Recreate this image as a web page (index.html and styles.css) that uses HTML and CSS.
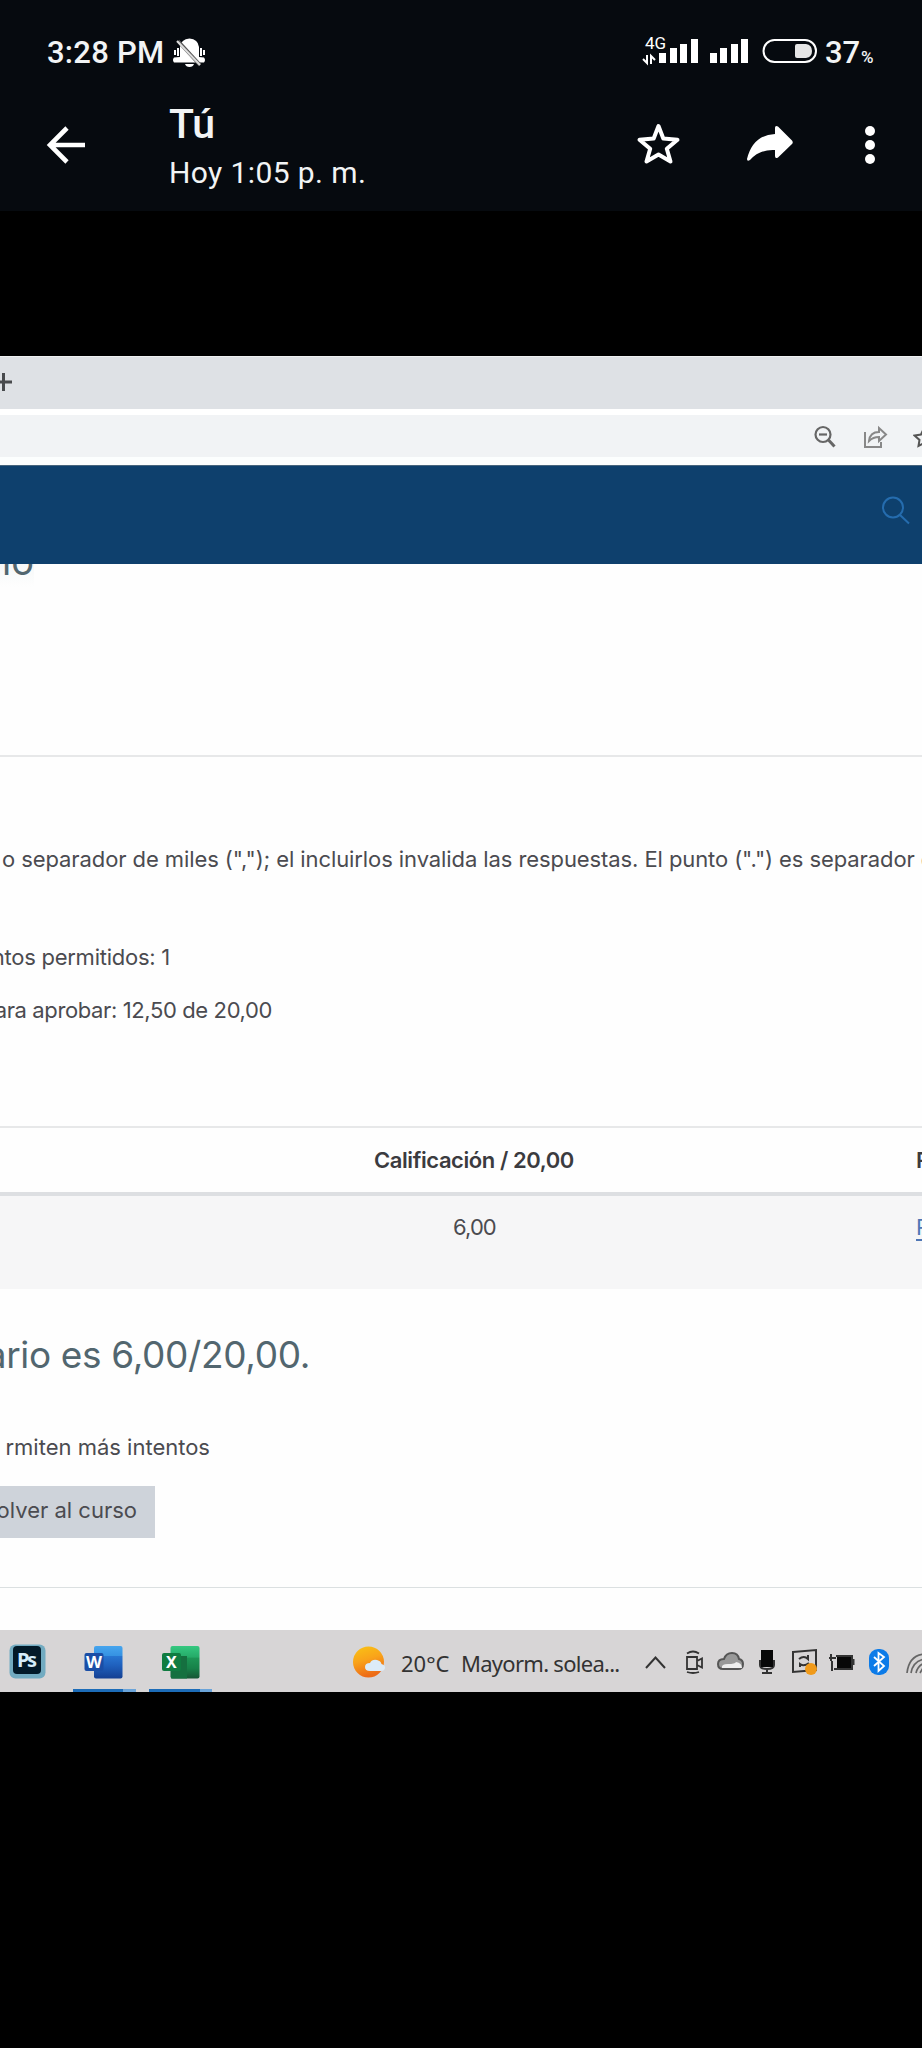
FILE: index.html
```html
<!DOCTYPE html>
<html lang="es">
<head>
<meta charset="utf-8">
<title>Tú</title>
<link rel="stylesheet" href="styles.css">
</head>
<body>
<header class="viewer-head">
  <div class="status">
    <span class="clock">3:28 PM</span>
    <svg class="bell" width="34" height="32" viewBox="172 37 34 32">
      <path fill="#fff" d="M180 57V47q1-8 9.500-8.500Q198 39 199 47v10l5 .5q2 2.500 0 5h-30q-2-2.500 0-5z"/>
      <path fill="#fff" d="M185 64h9q-1 3-4.500 3t-4.500-3zM174 50h2v5h-2zM177 48h2v8h-2zM200 48h2v8h-2zM203 50h2v5h-2z"/>
      <path stroke="#555" stroke-width="3.400" d="M178 41l22 24"/><path stroke="#ddd" stroke-width="2" d="M177 41l23 24"/>
    </svg>
    <svg class="signal" width="110" height="32" viewBox="640 35 110 32">
      <text class="net" x="645" y="49" textLength="21">4G</text>
      <path fill="#fff" d="M659 53h7v10h-7zM670 48h7v15h-7zM680 44h7v19h-7zM691 39h7v24h-7zM710 53h7v10h-7zM720 48h7v15h-7zM731 44h7v19h-7zM741 39h7v24h-7z"/>
      <path fill="none" stroke="#fff" stroke-width="2" d="M647 55v8l-4-4M651 64v-8l4 4"/>
    </svg>
    <svg class="battery" width="56" height="26" viewBox="762 38 56 26">
      <rect x="763.500" y="40" width="52.500" height="22" rx="11" fill="none" stroke="#fff" stroke-width="2"/>
      <path fill="#e6e6e6" d="M797 44h9q6 1 6 7t-6 7h-9q-2 0-2-2V46q0-2 2-2z"/>
    </svg>
    <span class="level">37</span><span class="percent">%</span>
  </div>
  <div class="appbar">
    <svg class="back" width="40" height="40" viewBox="46 125 40 40"><path fill="none" stroke="#fff" stroke-width="4.600" d="M85 145H50M67 128L50 145l17 17"/></svg>
    <div class="titles"><div class="name">Tú</div><div class="date">Hoy 1:05 p. m.</div></div>
    <svg class="star" width="46" height="44" viewBox="635 121 46 44"><path fill="none" stroke="#fff" stroke-width="4" stroke-linejoin="round" d="M658.500 126l4.800 12.500 14.200 1.300-10.700 9 3.700 12.700-12-7-12 7 3.700-12.700-10.700-9 14.200-1.300z"/></svg>
    <svg class="forward" width="48" height="40" viewBox="746 124 48 40"><path fill="#fff" d="M775 134v-6q0-3 3-1.500l14 14q1.500 2 0 3.500l-14 13.500q-3 1.500-3-1.500v-6q-15-1-25 10-3 2-3-1 6-24 28-25z"/></svg>
    <svg class="more" width="12" height="40" viewBox="864 125 12 40"><g fill="#fff"><circle cx="870" cy="131" r="5"/><circle cx="870" cy="145" r="5"/><circle cx="870" cy="159" r="5"/></g></svg>
  </div>
</header>
<main class="shot">
  <div class="tabs"><svg width="14" height="20" viewBox="0 372 14 20"><path fill="none" stroke="#484a4d" stroke-width="3" d="M-5 382h17M3.500 373v18"/></svg></div>
  <div class="toolbar">
    <svg width="24" height="24" viewBox="813 425 24 24"><g fill="none" stroke="#666" stroke-width="2.200"><circle cx="823" cy="434.500" r="7.500"/><path d="M819 434.500h8"/><path stroke-width="3" d="M828.500 440l6 6.500"/></g></svg>
    <svg class="share" width="26" height="24" viewBox="862 425 26 24"><g fill="none" stroke="#888" stroke-width="2"><path d="M865 432v15h16v-5"/><path d="M869 441q1-9 10-9v-4l7 6.500-7 6.500v-4q-6 0-10 4z"/></g></svg>
    <svg class="fav" width="9" height="24" viewBox="913 425 9 24"><path fill="none" stroke="#555" stroke-width="2" d="M924 428l-3 6.500-6.500 1 5 4.500-1 6 5.500-3"/></svg>
  </div>
  <div class="site-head"><svg width="30" height="30" viewBox="880 495 30 30"><g fill="none" stroke="#256cae" stroke-width="2"><circle cx="893" cy="507.500" r="10"/><path d="M900 515l9 8.500"/></g></svg></div>
  <div class="cut-title"><span>io</span></div>
  <section class="intro">
    <p class="instructions">o separador de miles (","); el incluirlos invalida las respuestas. El punto (".") es separador d</p>
    <p class="attempts"><span>ntos permitidos: 1</span></p>
    <p class="pass"><span>ara aprobar: 12,50 de 20,00</span></p>
  </section>
  <div class="grades">
    <div class="grade-head"><b>Calificación / 20,00</b><b class="review">R</b></div>
    <div class="grade-row"><span class="mark">6,00</span><a class="review">R</a></div>
  </div>
  <h2 class="final"><span>ario es 6,00/20,00.</span></h2>
  <p class="no-more"><span>rmiten más intentos</span></p>
  <div class="button"><span>olver al curso</span></div>
  <footer class="taskbar">
    <svg class="apps" width="220" height="62" viewBox="0 1630 220 62">
      <defs>
        <linearGradient id="w" x2="0" y2="1"><stop offset="0" stop-color="#46a5ee"/><stop offset=".3" stop-color="#3692e2"/><stop offset=".31" stop-color="#2876d2"/><stop offset=".6" stop-color="#1f60bd"/><stop offset="1" stop-color="#143f92"/></linearGradient>
        <linearGradient id="x" x2="0" y2="1"><stop offset="0" stop-color="#35c880"/><stop offset=".35" stop-color="#25aa68"/><stop offset=".36" stop-color="#1d9656"/><stop offset=".68" stop-color="#178249"/><stop offset="1" stop-color="#175535"/></linearGradient>
      </defs>
      <rect x="9.500" y="1643.500" width="36" height="34" rx="6" fill="#72abc1"/><rect x="13" y="1645" width="28" height="28" rx="4" fill="#021a29"/>
      <text class="ps" x="17" y="1666" textLength="20">Ps</text>
      <rect x="94" y="1645" width="28.500" height="32.500" rx="2" fill="url(#w)"/><rect x="84.500" y="1652" width="19" height="18" rx="2" fill="#1a4ea6"/><text class="tile" x="86" y="1667" textLength="16" lengthAdjust="spacingAndGlyphs">W</text>
      <rect x="170.500" y="1645" width="29" height="32.500" rx="2" fill="url(#x)"/><path fill="#157040" d="M171 1655h16v22.500h-16z"/><rect x="162" y="1652" width="19" height="18" rx="2" fill="#107c41"/><text class="tile" x="166" y="1667" textLength="11">X</text>
      <path fill="#1c6cb8" d="M73 1688h50v4H73zM149 1688h51v4h-51z"/><path fill="#6ba4d9" d="M123 1688h13v4h-13zM200 1688h12v4h-12z"/>
    </svg>
    <svg class="sun" width="34" height="36" viewBox="352 1643 34 36">
      <defs><linearGradient id="s" x2=".3" y2="1"><stop stop-color="#f9c414"/><stop offset=".5" stop-color="#f9a31a"/><stop offset="1" stop-color="#ed6b17"/></linearGradient></defs>
      <circle cx="368.500" cy="1661" r="15.500" fill="url(#s)"/><path fill="#dcebf8" d="M370 1670q-5 0-5-4 0-4 5-4 2-4 7-3 4 1 4.500 4 4 1 3.500 4t-4 3z"/>
    </svg>
    <span class="temp">20°C</span><span class="weather">Mayorm. solea...</span>
    <svg class="tray" width="282" height="62" viewBox="640 1630 282 62">
      <g fill="none" stroke="#333" stroke-width="2">
        <path d="M646 1667l9.500-10.500 9.500 10.500"/>
        <path stroke-width="1.800" d="M687 1652.500q6-4 12 0M687 1671q6 2 12 0M687 1656h10v12h-10zM697 1660l5-2.500v9l-5-2.500z"/>
        <path stroke="#555" fill="#999" d="M723 1668q-5 0-5-5t6-5q2-6 8-6t7 6q4 1 4 5 0 5-5 5z"/>
        <path d="M760 1659v5q0 4 7 4t7-4v-5M767 1668v4M762 1672h10"/>
        <path d="M793 1651l23-2v20l-23 2zM799 1658q5-4 9 0v-4M809 1662q-5 4-9 1v3"/>
        <path d="M836 1655h16v13h-18M831 1653v7M829 1657h7M832 1660v10M853.500 1658v6"/>
        <g stroke="#666" stroke-width="1.700"><path d="M907 1672q2-18 18-19M911 1672q2-12 14-14M916 1672q2-8 9-10M920 1672l3-5"/></g>
      </g>
      <path fill="#eee" d="M722 1667q-1-4 6-4t8-2q6 1 6 6z"/>
      <rect x="761" y="1649" width="12" height="17" fill="#080808"/><rect x="837" y="1656" width="14" height="11" fill="#080808"/>
      <circle cx="811" cy="1668" r="6" fill="#f09a1a"/>
      <rect x="869" y="1648" width="20" height="26" rx="9" fill="#0c7be8"/><path fill="none" stroke="#fff" stroke-width="1.800" d="M874 1656l10 9-5.500 5v-18l5.500 4-10 9"/>
    </svg>
  </footer>
</main>
</body>
</html>
```
FILE: styles.css
```css
* { box-sizing: border-box; }
body { margin: 0; background: #000; width: 922px; height: 2048px; overflow: hidden; }
svg { display: block; flex: none; }
p, h2 { margin: 0; font-weight: 400; }
.viewer-head { height: 211px; background: #060a0f; color: #f2f4f5; font-family: Roboto, sans-serif; }
.status { display: flex; height: 104px; padding-left: 47px; white-space: nowrap; }
.clock { width: 125px; font-size: 31px; font-weight: 500; letter-spacing: .25px; line-height: 105px; }
.bell { margin-top: 37px; }
.signal { margin: 35px 0 0 434px; }
.net { font: 17px Roboto, sans-serif; fill: #fff; }
.battery { margin: 38px 0 0 12px; }
.level { width: 36px; margin-left: 7px; font-size: 31px; font-weight: 500; line-height: 105px; }
.percent { font-size: 17px; font-weight: 500; line-height: 115px; }
.appbar { display: flex; height: 107px; padding-left: 46px; }
.back { margin-top: 21px; }
.titles { width: 466px; margin-left: 83px; white-space: nowrap; }
.name { height: 40px; font-size: 41px; font-weight: 500; line-height: 40px; }
.date { height: 50px; margin-top: 4px; font-size: 30px; line-height: 50px; letter-spacing: .4px; }
.star { margin-top: 17px; }
.forward { margin: 20px 0 0 65px; }
.more { margin: 21px 0 0 70px; }

.shot { height: 1336px; margin-top: 145px; overflow: hidden; background: #fefefe; color: #4b4b50; font: 22px Inter, sans-serif; white-space: nowrap; }
.tabs { height: 53px; padding-top: 15px; background: #dee1e5; border-top: 1px solid #eff1f2; }
.toolbar { display: flex; align-items: center; height: 56px; padding: 2px 0 0 813px; background: #f1f3f5; border-top: 6px solid #fff; border-bottom: 8px solid #fcfefe; }
.share { margin-left: 25px; }
.fav { margin-left: 25px; }
.site-head { height: 99px; padding: 29px 0 0 880px; background: #0e406d; border-top: 1px solid #47657d; }
.cut-title { display: flex; justify-content: flex-end; align-items: flex-end; width: 34px; height: 23px; overflow: hidden; color: #52666f; font-size: 38px; background: linear-gradient(#f6f8f8, #fefefe); }
.cut-title span { line-height: 44px; margin-bottom: 4px; }
.intro { height: 371px; margin-top: 168px; padding-top: 82px; border-top: 2px solid #e7e8e9; }
.instructions { height: 40px; padding-left: 2px; line-height: 40px; letter-spacing: -.09px; }
.attempts, .pass { display: flex; justify-content: flex-end; height: 40px; line-height: 40px; overflow: hidden; }
.attempts { width: 170px; margin-top: 58px; letter-spacing: -.25px; }
.pass { width: 272px; margin-top: 13px; letter-spacing: -.38px; }
.grade-head { position: relative; height: 70px; margin-top: 0; border-top: 2px solid #e7e8e9; border-bottom: 4px solid #dddfe2; padding-left: 374px; line-height: 65px; color: #3b3b3f; letter-spacing: -.42px; }
.grade-head b { font-weight: 600; }
.grade-row { position: relative; height: 93px; padding-left: 453px; background: #f6f6f7; line-height: 62px; }
.mark { letter-spacing: -.9px; }
.grade-head .review, .grade-row .review { position: absolute; left: 916px; top: 0; }
.grade-row .review { color: #4f76b5; text-decoration: underline; text-underline-offset: 4px; }
.final { display: flex; justify-content: flex-end; width: 310px; height: 60px; margin-top: 36px; overflow: hidden; color: #52666f; font-size: 37px; line-height: 60px; letter-spacing: -.35px; }
.no-more { display: flex; justify-content: flex-end; width: 210px; height: 40px; margin-top: 42px; overflow: hidden; line-height: 40px; }
.button { display: flex; justify-content: flex-end; width: 155px; height: 52px; margin-top: 19px; padding-right: 18px; overflow: hidden; background: #ced3da; line-height: 49px; }
.taskbar { display: flex; height: 105px; margin-top: 49px; padding-top: 43px; border-top: 1px solid #dbe0e1; background: linear-gradient(#fefefe 42px, #d7d5d6 42px); color: #333; font-family: "Noto Sans", sans-serif; }
.sun { margin: 13px 0 0 132px; }
.temp { width: 60px; margin-left: 15px; line-height: 64px; }
.weather { width: 179px; line-height: 64px; letter-spacing: -.72px; }
.ps { font: 700 20px "Noto Sans", sans-serif; fill: #d5edf9; }
.tile { font: 700 16px "Noto Sans", sans-serif; fill: #fff; }
```
